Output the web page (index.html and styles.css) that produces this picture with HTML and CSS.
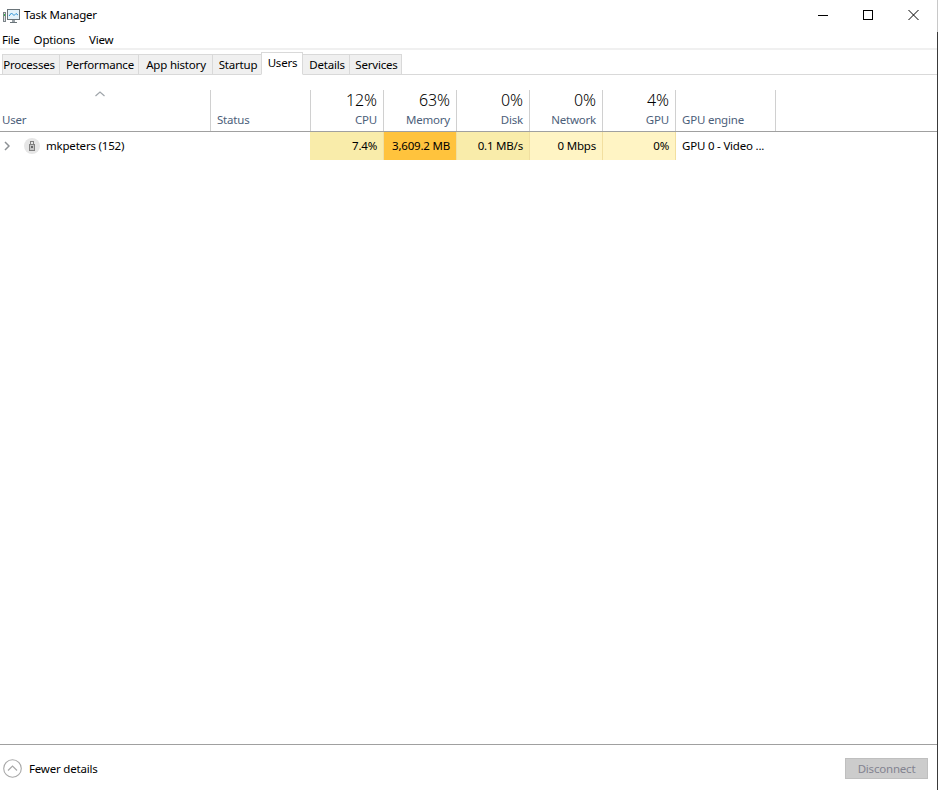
FILE: index.html
```html
<!DOCTYPE html>
<html lang="en">
<head>
<meta charset="utf-8">
<title>Task Manager</title>
<link rel="stylesheet" href="styles.css">
</head>
<body>
<div class="window">
  <header class="titlebar">
    <svg class="app-icon" width="17" height="14" viewBox="0 0 17 14">
      <rect x="0.500" y="3.500" width="2" height="9" fill="#dfe3e5" stroke="#7c8489"/>
      <rect x="1" y="5" width="1" height="2" fill="#35b34a"/>
      <rect x="4.500" y="0.500" width="12" height="10" fill="#e4f3fb" stroke="#6a7479"/>
      <path d="M6 7l2.500-3 2.500 2.500 2-2 2 1.500" fill="none" stroke="#2f95d6"/>
      <rect x="9" y="11" width="3" height="2" fill="#9aa2a7"/>
      <rect x="7" y="13" width="7" height="1" fill="#6a7479"/>
    </svg>
    <span class="title">Task Manager</span>
    <div class="win-controls">
      <svg width="10" height="10" viewBox="0 0 10 10"><path d="M0 5.500h10" stroke="#000" fill="none"/></svg>
      <svg width="10" height="10" viewBox="0 0 10 10"><rect x="0.500" y="0.500" width="9" height="9" stroke="#000" fill="none"/></svg>
      <svg width="11" height="10" viewBox="0 0 11 10"><path d="M0.500 0l10 10M10.500 0l-10 10" stroke="#000" fill="none"/></svg>
    </div>
  </header>
  <nav class="menu">
    <span>File</span><span>Options</span><span>View</span>
  </nav>
  <div class="tabs">
    <span class="tab w-processes">Processes</span>
    <span class="tab w-performance">Performance</span>
    <span class="tab w-history">App history</span>
    <span class="tab w-startup">Startup</span>
    <span class="tab active">Users</span>
    <span class="tab w-details">Details</span>
    <span class="tab w-services">Services</span>
  </div>
  <main class="content">
    <div class="grid head">
      <div class="hcell user">
        <svg class="sort" width="10" height="6" viewBox="0 0 10 6"><path d="M0.500 5L5 1l4.500 4" fill="none" stroke="#a0a6ab" stroke-width="1.200"/></svg>
        <span class="label">User</span>
      </div>
      <div class="hcell"><span class="label">Status</span></div>
      <div class="hcell num"><span class="pct">12%</span><span class="label">CPU</span></div>
      <div class="hcell num"><span class="pct">63%</span><span class="label">Memory</span></div>
      <div class="hcell num"><span class="pct">0%</span><span class="label">Disk</span></div>
      <div class="hcell num"><span class="pct">0%</span><span class="label">Network</span></div>
      <div class="hcell num"><span class="pct">4%</span><span class="label">GPU</span></div>
      <div class="hcell"><span class="label">GPU engine</span></div>
    </div>
    <div class="grid row">
      <div class="cell usercell">
        <svg class="chev" width="6" height="10" viewBox="0 0 6 10"><path d="M1 1l4 4-4 4" fill="none" stroke="#8c9094" stroke-width="1.500"/></svg>
        <svg class="avatar" width="16" height="16" viewBox="0 0 16 16">
          <circle cx="8" cy="8" r="8" fill="#e6e6e6"/>
          <rect x="5.500" y="6.500" width="5" height="6" fill="#c4c4c4" stroke="#808080"/>
          <rect x="6.500" y="3.500" width="3" height="3" fill="#e6e6e6" stroke="#808080"/>
          <path d="M7 8h2v2H7z" fill="#666"/>
        </svg>
        <span class="username">mkpeters (152)</span>
      </div>
      <div class="cell status-cell"></div>
      <div class="cell num heat-cpu">7.4%</div>
      <div class="cell num heat-mem">3,609.2 MB</div>
      <div class="cell num heat-disk">0.1 MB/s</div>
      <div class="cell num heat-low">0 Mbps</div>
      <div class="cell num heat-low">0%</div>
      <div class="cell">GPU 0 - Video ...</div>
    </div>
  </main>
  <footer class="footer">
    <div class="fewer">
      <svg width="19" height="19" viewBox="0 0 19 19"><circle cx="9.500" cy="9.500" r="8.800" fill="none" stroke="#a8a8a8" stroke-width="1.100"/><path d="M5 11.500l4.500-4.500 4.500 4.500" fill="none" stroke="#a8a8a8" stroke-width="1.200"/></svg>
      <span>Fewer details</span>
    </div>
    <button class="disconnect" disabled>Disconnect</button>
  </footer>
</div>
</body>
</html>
```
FILE: styles.css
```css
* { box-sizing: border-box; }
html, body { margin: 0; height: 100%; background: #fff; }
body { font: 11.5px/16px "Noto Sans", "Open Sans", sans-serif; letter-spacing: -0.2px; color: #000; overflow: hidden; }
.window { width: 938px; height: 790px; display: flex; flex-direction: column; padding-right: 1px; background: linear-gradient(#c8c8c8 32px, #3a3a3a 32px) right top / 1px 100% no-repeat; }
.titlebar { height: 30px; display: flex; align-items: center; padding-left: 3px; flex: none; }
.app-icon { margin: 1px 4px 0 0; }
.title { flex: 1; }
.win-controls { display: flex; gap: 35px; padding-right: 18px; }
.win-controls svg { flex: none; }
.menu { height: 18px; display: flex; gap: 14px; padding-left: 2px; align-items: center; flex: none; padding-top: 1px; }
.tabs { height: 27px; flex: none; display: flex; align-items: flex-end; border-top: 2px solid #f0f0f0; border-bottom: 1px solid #d9d9d9; padding: 0 0 0 2px; }
.tab { height: 21px; margin-bottom: -1px; border: 1px solid #d9d9d9; border-left: 0; background: #f0f0f0; text-align: center; line-height: 20px; }
.tab:first-child { border-left: 1px solid #d9d9d9; }
.w-processes { width: 58px; padding-right: 4px; }
.w-performance { width: 79px; padding-left: 2px; }
.w-history { width: 74px; padding-left: 1px; }
.w-startup { width: 49px; padding-left: 2px; }
.w-details { width: 47px; padding-left: 2px; }
.w-services { width: 52px; padding-left: 2px; }
.tab.active { width: 42px; height: 23px; background: #fff; border-left: 1px solid #d9d9d9; border-bottom-color: #fff; line-height: 19px; margin-left: -1px; padding-left: 1px; }
.content { flex: 1; min-height: 0; padding-top: 15px; }
.grid { display: grid; grid-template-columns: 211px 100px 73px 73px 73px 73px 73px 100px; }
.head { height: 42px; border-bottom: 1px solid #a0a0a0; width: 100%; }
.hcell { border-right: 1px solid #d0d0d0; display: flex; flex-direction: column; justify-content: flex-end; padding: 0 6px 3px; position: relative; }
.hcell.user { padding-left: 2px; }
.sort { position: absolute; top: 1px; left: 95px; }
.label { color: #4c607a; line-height: 16px; }
.pct { font-size: 16px; font-weight: 300; letter-spacing: -0.1px; line-height: 20px; color: #000; margin-bottom: 2px; }
.num { text-align: right; align-items: flex-end; }
.row { height: 28px; }
.cell { padding: 0 6px; line-height: 27px; white-space: nowrap; overflow: hidden; }
.usercell { display: flex; align-items: center; padding-left: 4px; }
.chev { margin-right: 14px; }
.avatar { margin-right: 6px; }
.username { margin-top: -2px; }
.status-cell { border-right: 1px solid #f9ecaa; }
.heat-cpu { background: #f9ecaa; border-right: 1px solid #f0dfa0; }
.heat-mem { background: #ffc33d; border-right: 1px solid #f0dfa0; }
.heat-disk { background: #f9ecaa; border-right: 1px solid #f0dfa0; }
.heat-low { background: #fff4c4; border-right: 1px solid #f2dfa0; }
.footer { height: 46px; flex: none; border-top: 1px solid #a0a0a0; display: flex; align-items: center; justify-content: space-between; padding: 2px 9px 0 3px; }
.fewer { display: flex; align-items: center; gap: 7px; }
.disconnect { width: 83px; height: 21px; font: inherit; letter-spacing: inherit; color: #838390; background: #cccccc; border: 1px solid #bfbfbf; padding: 0; }
```
